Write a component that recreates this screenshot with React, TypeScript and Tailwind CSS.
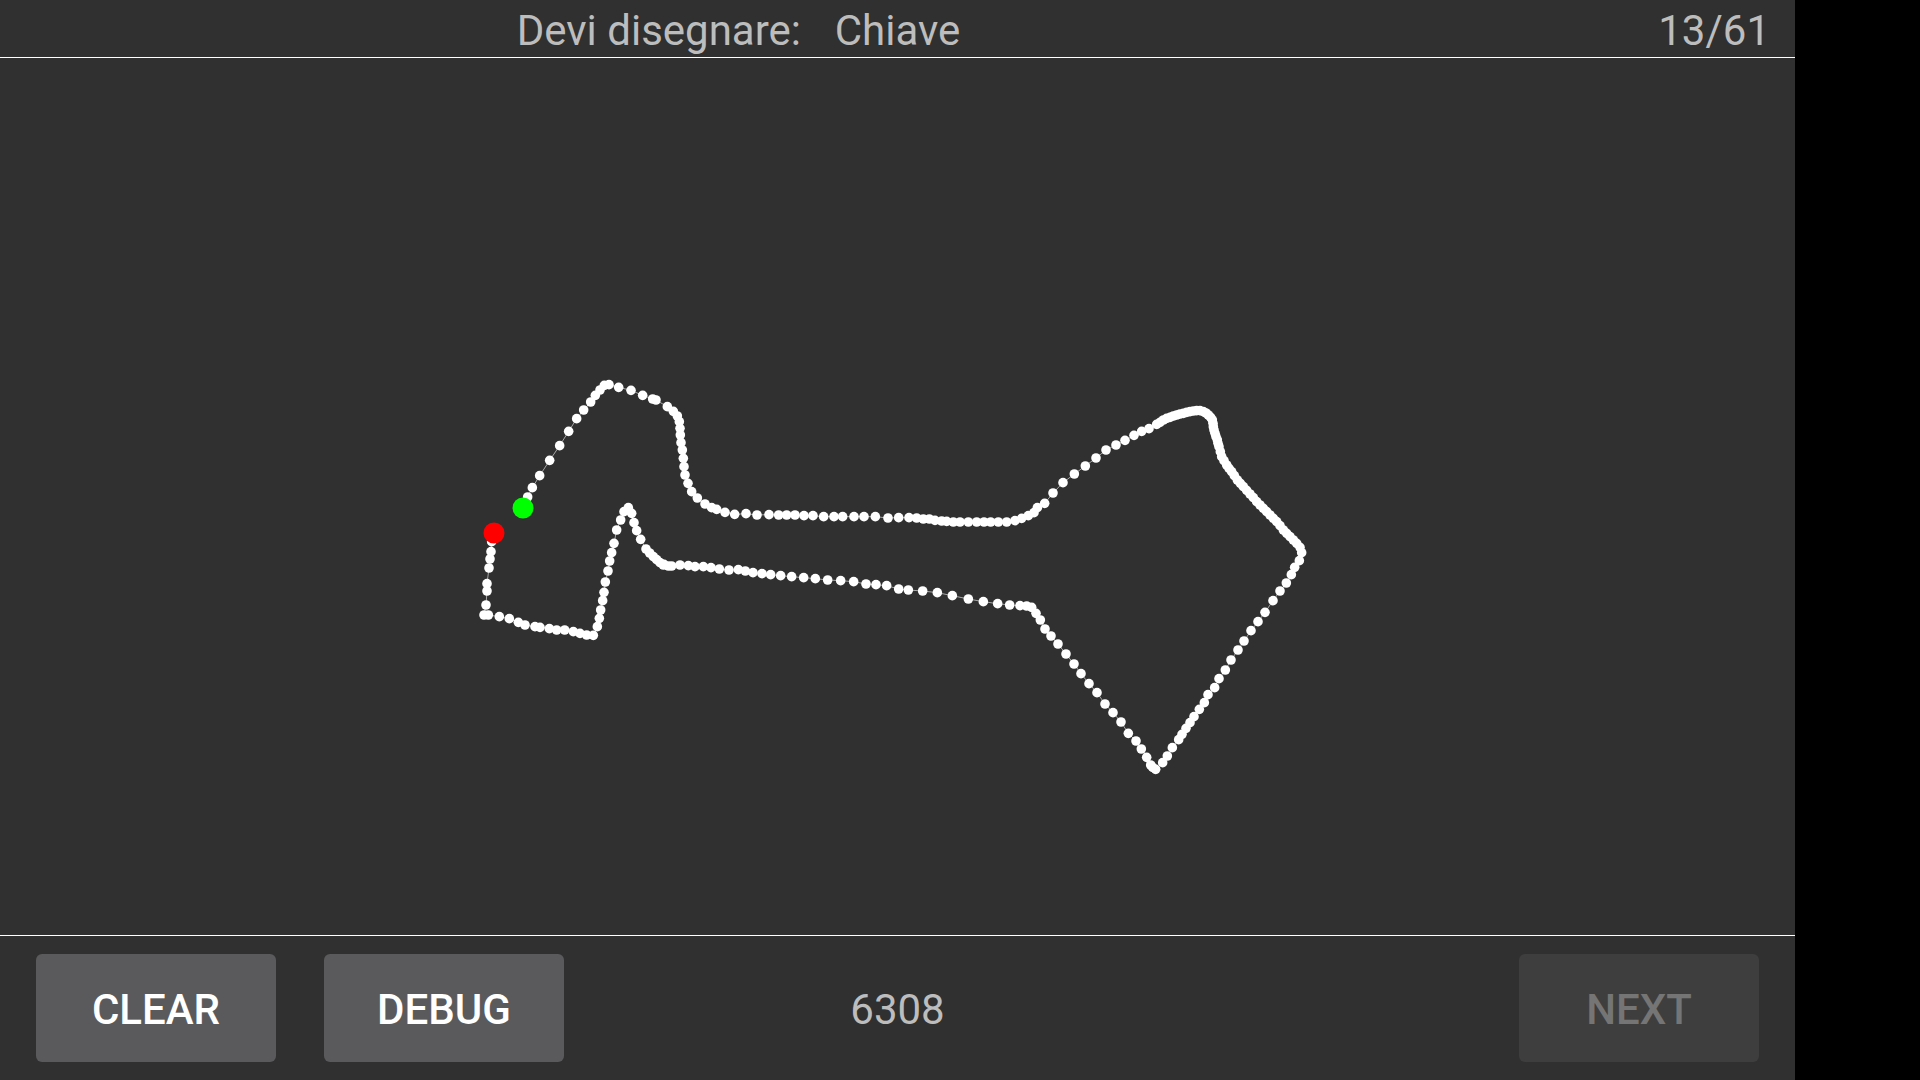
const z5 = [[203,381],[217,353],[239,317],[269,271],[299,227],[326,184],[350,146],[371,120],[392,96],[406,76],[420,60],[433,46],[447,44],[476,52],[513,61],[548,76],[578,87],[588,90],[622,110],[640,124],[652,138],[658,155],[660,175],[661,195],[663,218],[667,240],[670,265],[672,290],[675,315],[684,340],[695,365],[712,384],[735,402],[755,413],[770,418]];
const z6a = [[195,337],[224,343],[258,341],[291,345],[327,344],[356,345],[380,345],[405,345],[432,347],[459,347],[491,350],[522,350],[548,350],[582,350],[612,350],[646,350],[684,354],[716,353],[747,353],[770,354],[790,357],[808,357],[825,361],[845,363],[860,364],[880,366],[900,366],[925,366],[950,366],[972,366],[992,366],[1015,366],[1040,366],[1065,362],[1085,355],[1105,347],[1122,338]];
const z7 = [[112,353],[134,340],[159,309],[189,278],[223,252],[256,228],[288,204],[318,180],[348,165],[375,151],[402,136],[425,124],[447,116],[470,103],[480,97],[490,90],[500,85],[510,82],[520,78],[530,75],[540,72],[550,70],[560,67],[570,65],[580,63],[590,62],[600,62],[610,65],[618,69],[625,75],[632,82],[637,90],[639,100],[640,110],[642,120],[645,130],[648,140],[652,150],[654,160],[657,170],[661,185],[665,200],[672,212],[680,225],[687,235],[695,245],[703,257],[712,270],[721,280],[730,290],[740,301],[750,312],[760,323],[770,335],[780,345],[790,355],[800,365],[810,375],[820,385],[830,395],[840,407],[850,420],[860,430],[870,440],[880,450],[890,460],[900,472],[905,488],[898,512],[884,532],[874,554],[859,579],[840,603],[819,632],[795,667],[774,695],[753,722],[732,753],[714,780],[693,810],[676,840],[657,866],[644,893],[624,914],[613,938],[598,958],[582,980],[570,998],[558,1015],[546,1033],[536,1049],[517,1073],[502,1098],[488,1118],[467,1138],[458,1132],[452,1125],[440,1102],[424,1077],[408,1053],[385,1030],[363,996],[339,968],[315,942],[291,908],[267,881],[243,851],[222,822],[198,792],[174,762],[153,738],[135,717],[121,690],[108,670],[95,652],[80,648],[60,647],[29,645]];
const z6b = [[1013,611],[970,605],[925,597],[877,587],[832,578],[788,573],[745,570],[716,567],[680,557],[648,554],[618,552],[581,545],[542,542],[503,540],[466,536],[431,533],[395,530],[362,527],[332,524],[306,521],[279,518],[256,513],[235,509],[207,510],[178,507],[153,503],[130,500],[105,500],[85,497],[60,495],[35,498],[10,495]];
const z5b = [[625,588],[612,583],[600,578],[590,569],[580,560],[569,549],[558,537],[542,508],[530,482],[522,458],[515,430],[505,413],[492,425],[482,450],[470,480],[462,520],[455,548],[449,573],[444,603],[436,636],[432,667],[428,692],[422,720],[418,745],[412,770],[400,796],[380,795],[360,790],[340,785],[314,780],[290,780],[268,776],[240,772],[225,770],[195,765],[175,757],[148,746],[118,740],[85,735],[72,735],[78,705],[81,663],[81,641],[87,594],[90,567],[93,545],[95,515]];

const map = (list: number[][], ox: number, oy: number) => list.map(([x, y]) => [ox + x / 3, oy + y / 3 - 58]);
const pts = [
  ...map(z5, 460, 370),
  ...map(z6a, 660, 400),
  ...map(z7, 1000, 390),
  ...map(z6b, 660, 400),
  ...map(z5b, 460, 370),
];
const green = [460 + 189 / 3, 370 + 414 / 3 - 58];
const red = [460 + 102 / 3, 370 + 489 / 3 - 58];

export default function App() {
  return (
    <div className="h-screen w-full bg-black overflow-hidden" style={{ fontFamily: "Roboto, sans-serif" }}>
      <div className="flex h-full w-[1795px] flex-col bg-[#303030]">
        <header className="flex h-[58px] shrink-0 items-center border-b border-white pt-1 text-[42px] leading-none text-[#bdbdbd]">
          <div className="w-[801px] text-right">Devi disegnare:</div>
          <div className="w-[193px] text-center">Chiave</div>
          <div className="flex-1 pr-[25px] text-right">13/61</div>
        </header>
        <main className="h-[877px] shrink-0">
          <svg width="1795" height="877" viewBox="0 0 1795 877" className="block">
            <polyline points={[green, ...pts, red].map((p) => p.join(",")).join(" ")} fill="none" stroke="#a8a8a8" strokeWidth="1" />
            {pts.map(([x, y], i) => (
              <circle key={i} cx={x} cy={y} r="4.8" fill="#ffffff" />
            ))}
            <circle cx={green[0]} cy={green[1]} r="10.5" fill="#00ff00" />
            <circle cx={red[0]} cy={red[1]} r="10.5" fill="#ff0000" />
          </svg>
        </main>
        <footer className="grid h-[145px] shrink-0 grid-cols-3 items-start border-t border-white pt-[18px]">
          <div className="flex gap-12 pl-9">
            <button className="h-[108px] w-[240px] rounded-md bg-[#5a5a5c] pt-0.5 text-[42px] font-medium text-white">CLEAR</button>
            <button className="h-[108px] w-[240px] rounded-md bg-[#5a5a5c] pt-0.5 text-[42px] font-medium text-white">DEBUG</button>
          </div>
          <div className="flex h-[108px] items-center justify-center pt-0.5 text-[42px] text-[#bdbdbd]">6308</div>
          <div className="flex justify-end pr-9">
            <button className="h-[108px] w-[240px] rounded-md bg-[#3e3e3e] pt-0.5 text-[42px] font-medium text-[#757575]">NEXT</button>
          </div>
        </footer>
      </div>
    </div>
  );
}
